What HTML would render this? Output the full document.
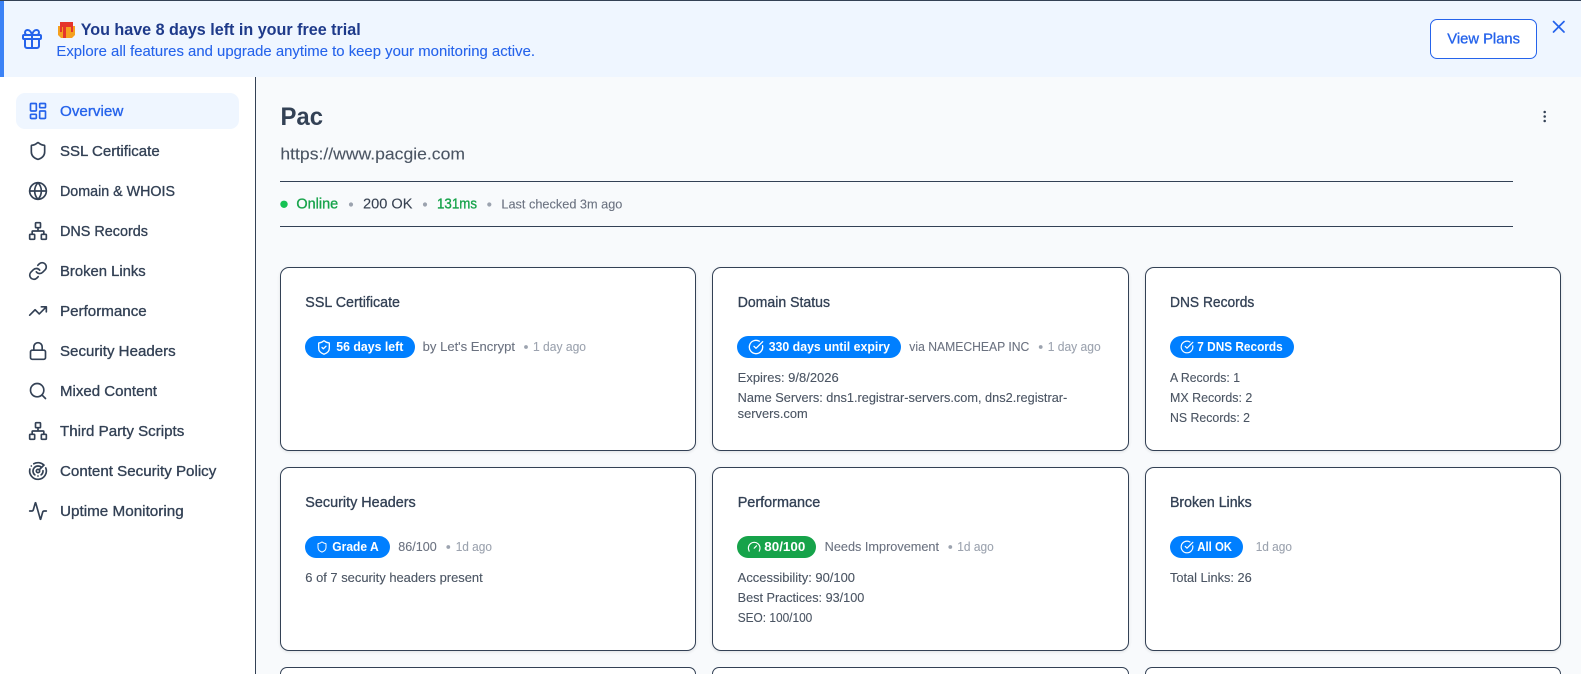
<!DOCTYPE html>
<html lang="en">
<head>
<meta charset="utf-8">
<title>Pac - Overview</title>
<style>
html,body{margin:0;padding:0;width:1581px;height:674px;overflow:hidden;background:#fff}
body{position:relative;font-family:"Liberation Sans",sans-serif}
.topline{position:absolute;left:0;top:0;width:1581px;height:1px;background:#334155}
.banner{position:absolute;left:0;top:1px;width:1581px;height:76px;background:#eff6ff;box-shadow:inset 4px 0 0 #3b82f6}
.btn{position:absolute;left:1430px;top:19px;width:105px;height:38px;background:#fff;border:1px solid #2563eb;border-radius:7px}
.main{position:absolute;left:256px;top:77px;width:1325px;height:597px;background:#f8fafc}
.side-line{position:absolute;left:255px;top:77px;width:1px;height:597px;background:#334155}
.active{position:absolute;left:16px;top:93px;width:223px;height:36px;background:#eff6ff;border-radius:9px}
.rule{position:absolute;left:280px;width:1233px;height:1px;background:#334155}
.card{position:absolute;box-sizing:border-box;width:416.33px;height:184px;background:#fff;border:1px solid #334155;border-radius:9px;box-shadow:0 1px 3px rgba(0,0,0,.1)}
.card.cut{height:7px;border-bottom:0;border-radius:9px 9px 0 0;box-shadow:none}
.pill{position:absolute;height:22px;border-radius:11px;background:#007fff}
svg.layer{position:absolute;left:0;top:0}
text{font-family:"Liberation Sans",sans-serif}
.side{font-size:14.6px;fill:#334155;stroke:#334155;stroke-width:.32}
.ct{font-size:14.6px;fill:#334155;stroke:#334155;stroke-width:.32}
.pt{font-size:12.6px;font-weight:700;fill:#fff}
.mt{font-size:12.6px;fill:#6b7280;stroke:#6b7280;stroke-width:.1}
.ag{font-size:12.6px;fill:#9ca3af;stroke:#9ca3af;stroke-width:.1}
.bd{font-size:12.6px;fill:#4b5563;stroke:#4b5563;stroke-width:.12}
.ic{fill:none;stroke:#334155;stroke-width:2;stroke-linecap:round;stroke-linejoin:round}
.pi{fill:none;stroke:#fff;stroke-width:2;stroke-linecap:round;stroke-linejoin:round}
</style>
</head>
<body>
<div class="banner"></div>
<div class="topline"></div>
<div class="btn"></div>
<div class="main"></div>
<div class="side-line"></div>
<div class="active"></div>
<div class="rule" style="top:181px"></div>
<div class="rule" style="top:226px"></div>

<div class="card" style="left:280px;top:267px"></div>
<div class="card" style="left:712.33px;top:267px"></div>
<div class="card" style="left:1144.67px;top:267px"></div>
<div class="card" style="left:280px;top:467px"></div>
<div class="card" style="left:712.33px;top:467px"></div>
<div class="card" style="left:1144.67px;top:467px"></div>
<div class="card cut" style="left:280px;top:667px"></div>
<div class="card cut" style="left:712.33px;top:667px"></div>
<div class="card cut" style="left:1144.67px;top:667px"></div>

<div class="pill" style="left:305px;top:336px;width:110px"></div>
<div class="pill" style="left:737px;top:336px;width:164px"></div>
<div class="pill" style="left:1170px;top:336px;width:124px"></div>
<div class="pill" style="left:305px;top:536px;width:85px"></div>
<div class="pill" style="left:737px;top:536px;width:79px;background:#16a34a"></div>
<div class="pill" style="left:1170px;top:536px;width:73px"></div>

<svg class="layer" width="1581" height="674" viewBox="0 0 1581 674" xmlns="http://www.w3.org/2000/svg">
<defs>
<symbol id="i-dash" viewBox="0 0 24 24"><rect x="3" y="3" width="7" height="9" rx="1"/><rect x="14" y="3" width="7" height="5" rx="1"/><rect x="14" y="12" width="7" height="9" rx="1"/><rect x="3" y="16" width="7" height="5" rx="1"/></symbol>
<symbol id="i-shield" viewBox="0 0 24 24"><path d="M20 13c0 5-3.5 7.5-7.66 8.95a1 1 0 0 1-.67-.01C7.5 20.5 4 18 4 13V6a1 1 0 0 1 1-1c2 0 4.5-1.2 6.24-2.72a1.17 1.17 0 0 1 1.52 0C14.51 3.81 17 5 19 5a1 1 0 0 1 1 1z"/></symbol>
<symbol id="i-shieldc" viewBox="0 0 24 24"><path d="M20 13c0 5-3.5 7.5-7.66 8.95a1 1 0 0 1-.67-.01C7.5 20.5 4 18 4 13V6a1 1 0 0 1 1-1c2 0 4.5-1.2 6.24-2.72a1.17 1.17 0 0 1 1.52 0C14.51 3.81 17 5 19 5a1 1 0 0 1 1 1z"/><path d="M9 12l2 2l4-4"/></symbol>
<symbol id="i-world" viewBox="0 0 24 24"><circle cx="12" cy="12" r="10"/><path d="M12 2a14.5 14.5 0 0 0 0 20a14.5 14.5 0 0 0 0-20M2 12h20"/></symbol>
<symbol id="i-map" viewBox="0 0 24 24"><rect x="16" y="16" width="6" height="6" rx="1"/><rect x="2" y="16" width="6" height="6" rx="1"/><rect x="9" y="2" width="6" height="6" rx="1"/><path d="M5 16v-3a1 1 0 0 1 1-1h12a1 1 0 0 1 1 1v3M12 12V8"/></symbol>
<symbol id="i-link" viewBox="0 0 24 24"><path d="M10 13a5 5 0 0 0 7.54.54l3-3a5 5 0 0 0-7.07-7.07l-1.72 1.71"/><path d="M14 11a5 5 0 0 0-7.54-.54l-3 3a5 5 0 0 0 7.07 7.07l1.71-1.71"/></symbol>
<symbol id="i-trend" viewBox="0 0 24 24"><path d="M22 7l-8.5 8.5l-5-5L2 17M16 7h6v6"/></symbol>
<symbol id="i-lock" viewBox="0 0 24 24"><rect x="3" y="11" width="18" height="11" rx="2"/><path d="M7 11V7a5 5 0 0 1 10 0v4"/></symbol>
<symbol id="i-search" viewBox="0 0 24 24"><circle cx="11" cy="11" r="8"/><path d="M21 21l-4.3-4.3"/></symbol>
<symbol id="i-radar" viewBox="0 0 24 24"><path d="M19.07 4.93A10 10 0 0 0 6.99 3.34M4 6h.01M2.29 9.62A10 10 0 1 0 21.31 8.35M16.24 7.76A6 6 0 1 0 8.23 16.67M12 18h.01M17.99 11.66A6 6 0 0 1 15.77 16.67"/><circle cx="12" cy="12" r="2"/><path d="M13.41 10.59l5.66-5.66"/></symbol>
<symbol id="i-pulse" viewBox="0 0 24 24"><path d="M22 12h-2.48a2 2 0 0 0-1.93 1.46l-2.35 8.36a.25.25 0 0 1-.48 0L9.24 2.18a.25.25 0 0 0-.48 0l-2.35 8.36A2 2 0 0 1 4.49 12H2"/></symbol>
<symbol id="i-check" viewBox="0 0 24 24"><path d="M21.801 10A10 10 0 1 1 17 3.335M9 11l3 3L22 4"/></symbol>
<symbol id="i-gauge" viewBox="0 0 24 24"><path d="M12 14l4-4M3.34 19a10 10 0 1 1 17.32 0"/></symbol>
</defs>

<!-- banner -->
<g fill="none" stroke="#2563eb" stroke-width="2" stroke-linecap="round" stroke-linejoin="round" transform="translate(20 27)">
<rect x="3" y="8" width="18" height="4" rx="1"/>
<path d="M12 8v13M19 12v7a2 2 0 0 1-2 2H7a2 2 0 0 1-2-2v-7M7.5 8a2.5 2.5 0 0 1 0-5A4.8 8 0 0 1 12 8a4.8 8 0 0 1 4.5-5a2.5 2.5 0 0 1 0 5"/>
</g>
<g>
<path d="M58 26h17v9l-3 3h-11l-3-3z" fill="#f5a01f"/>
<rect x="60" y="22" width="13" height="5" fill="#e5352b"/>
<rect x="63" y="25" width="3" height="13" fill="#e5352b"/>
<rect x="60" y="27" width="2" height="5" fill="#e5352b"/>
<rect x="71" y="27" width="2" height="5" fill="#e5352b"/>
</g>
<text x="80.7" y="35" textLength="280" lengthAdjust="spacingAndGlyphs" font-size="16.7" font-weight="700" fill="#1e3a8a">You have 8 days left in your free trial</text>
<text x="56.4" y="56" textLength="478.6" lengthAdjust="spacingAndGlyphs" font-size="14.6" fill="#2563eb" stroke="#2563eb" stroke-width=".1">Explore all features and upgrade anytime to keep your monitoring active.</text>
<text x="1447.3" y="43.5" textLength="72.7" lengthAdjust="spacingAndGlyphs" font-size="14.6" fill="#2563eb" stroke="#2563eb" stroke-width=".32">View Plans</text>
<path d="M1553.5 21.5l10.5 10.5M1564 21.5l-10.5 10.5" fill="none" stroke="#2563eb" stroke-width="1.7" stroke-linecap="round"/>

<!-- sidebar -->
<use href="#i-dash" x="28" y="101" width="20" height="20" class="ic" style="stroke:#2563eb"/>
<use href="#i-shield" x="28" y="141" width="20" height="20" class="ic"/>
<use href="#i-world" x="28" y="181" width="20" height="20" class="ic"/>
<use href="#i-map" x="28" y="221" width="20" height="20" class="ic"/>
<use href="#i-link" x="28" y="261" width="20" height="20" class="ic"/>
<use href="#i-trend" x="28" y="301" width="20" height="20" class="ic"/>
<use href="#i-lock" x="28" y="341" width="20" height="20" class="ic"/>
<use href="#i-search" x="28" y="381" width="20" height="20" class="ic"/>
<use href="#i-map" x="28" y="421" width="20" height="20" class="ic"/>
<use href="#i-radar" x="28" y="461" width="20" height="20" class="ic"/>
<use href="#i-pulse" x="28" y="501" width="20" height="20" class="ic"/>

<text x="60" y="116" textLength="63.3" lengthAdjust="spacingAndGlyphs" class="side" style="fill:#2563eb;stroke:#2563eb">Overview</text>
<text x="60" y="156" textLength="99.7" lengthAdjust="spacingAndGlyphs" class="side">SSL Certificate</text>
<text x="60" y="196" textLength="115" lengthAdjust="spacingAndGlyphs" class="side">Domain &amp; WHOIS</text>
<text x="60" y="236" textLength="88" lengthAdjust="spacingAndGlyphs" class="side">DNS Records</text>
<text x="60" y="276" textLength="85.7" lengthAdjust="spacingAndGlyphs" class="side">Broken Links</text>
<text x="60" y="316" textLength="86.7" lengthAdjust="spacingAndGlyphs" class="side">Performance</text>
<text x="60" y="356" textLength="115.7" lengthAdjust="spacingAndGlyphs" class="side">Security Headers</text>
<text x="60" y="396" textLength="97" lengthAdjust="spacingAndGlyphs" class="side">Mixed Content</text>
<text x="60" y="436" textLength="124.3" lengthAdjust="spacingAndGlyphs" class="side">Third Party Scripts</text>
<text x="60" y="476" textLength="156.3" lengthAdjust="spacingAndGlyphs" class="side">Content Security Policy</text>
<text x="60" y="516" textLength="123.7" lengthAdjust="spacingAndGlyphs" class="side">Uptime Monitoring</text>

<!-- header -->
<text x="280.5" y="125" textLength="42.5" lengthAdjust="spacingAndGlyphs" font-size="25" font-weight="700" fill="#334155">Pac</text>
<text x="280.4" y="159.3" textLength="184.6" lengthAdjust="spacingAndGlyphs" font-size="16.6" fill="#4b5563" stroke="#4b5563" stroke-width=".1">https://www.pacgie.com</text>
<g fill="#334155"><circle cx="1544.7" cy="112" r="1.25"/><circle cx="1544.7" cy="116.5" r="1.25"/><circle cx="1544.7" cy="121" r="1.25"/></g>

<circle cx="284" cy="204.3" r="3.7" fill="#16c253"/>
<text x="296.4" y="208.7" textLength="41.8" lengthAdjust="spacingAndGlyphs" font-size="14.6" fill="#16a34a" stroke="#16a34a" stroke-width=".32">Online</text>
<circle cx="351" cy="204.5" r="2.1" fill="#9ca3af"/>
<text x="363" y="208.7" textLength="49.5" lengthAdjust="spacingAndGlyphs" font-size="14.6" fill="#374151" stroke="#374151" stroke-width=".1">200 OK</text>
<circle cx="425" cy="204.5" r="2.1" fill="#9ca3af"/>
<text x="437" y="208.7" textLength="40" lengthAdjust="spacingAndGlyphs" font-size="14.6" fill="#16a34a" stroke="#16a34a" stroke-width=".32">131ms</text>
<circle cx="489.3" cy="204.5" r="2.1" fill="#9ca3af"/>
<text x="501.4" y="208.3" textLength="121" lengthAdjust="spacingAndGlyphs" class="mt">Last checked 3m ago</text>

<!-- row 1 -->
<text x="305.3" y="307" textLength="94.7" lengthAdjust="spacingAndGlyphs" class="ct">SSL Certificate</text>
<use href="#i-shieldc" x="316" y="339.5" width="16" height="16" class="pi"/>
<text x="336.3" y="351" textLength="67" lengthAdjust="spacingAndGlyphs" class="pt">56 days left</text>
<text x="422.7" y="351" textLength="92.3" lengthAdjust="spacingAndGlyphs" class="mt">by Let's Encrypt</text>
<circle cx="526" cy="347" r="1.9" fill="#9ca3af"/>
<text x="533" y="351" textLength="53" lengthAdjust="spacingAndGlyphs" class="ag">1 day ago</text>

<text x="737.7" y="307" textLength="92.3" lengthAdjust="spacingAndGlyphs" class="ct">Domain Status</text>
<use href="#i-check" x="748" y="339" width="16" height="16" class="pi"/>
<text x="768.7" y="351" textLength="121.3" lengthAdjust="spacingAndGlyphs" class="pt">330 days until expiry</text>
<text x="909.3" y="351" textLength="120" lengthAdjust="spacingAndGlyphs" class="mt">via NAMECHEAP INC</text>
<circle cx="1040.7" cy="347" r="1.9" fill="#9ca3af"/>
<text x="1047.7" y="351" textLength="53" lengthAdjust="spacingAndGlyphs" class="ag">1 day ago</text>
<text x="737.7" y="382" textLength="101" lengthAdjust="spacingAndGlyphs" class="bd">Expires: 9/8/2026</text>
<text x="737.7" y="402" textLength="329.6" lengthAdjust="spacingAndGlyphs" class="bd">Name Servers: dns1.registrar-servers.com, dns2.registrar-</text>
<text x="737.7" y="418" textLength="70" lengthAdjust="spacingAndGlyphs" class="bd">servers.com</text>

<text x="1170" y="307" textLength="84.3" lengthAdjust="spacingAndGlyphs" class="ct">DNS Records</text>
<use href="#i-check" x="1180" y="340" width="14" height="14" class="pi"/>
<text x="1197.3" y="351" textLength="85.4" lengthAdjust="spacingAndGlyphs" class="pt">7 DNS Records</text>
<text x="1170" y="382" textLength="70" lengthAdjust="spacingAndGlyphs" class="bd">A Records: 1</text>
<text x="1170" y="402" textLength="82.3" lengthAdjust="spacingAndGlyphs" class="bd">MX Records: 2</text>
<text x="1170" y="422" textLength="80" lengthAdjust="spacingAndGlyphs" class="bd">NS Records: 2</text>

<!-- row 2 -->
<text x="305.3" y="507" textLength="110.4" lengthAdjust="spacingAndGlyphs" class="ct">Security Headers</text>
<use href="#i-shield" x="316" y="541" width="12" height="12" class="pi"/>
<text x="332.3" y="551" textLength="46.4" lengthAdjust="spacingAndGlyphs" class="pt">Grade A</text>
<text x="398.3" y="551" textLength="38.4" lengthAdjust="spacingAndGlyphs" class="mt">86/100</text>
<circle cx="448.3" cy="547" r="1.9" fill="#9ca3af"/>
<text x="455.7" y="551" textLength="36.3" lengthAdjust="spacingAndGlyphs" class="ag">1d ago</text>
<text x="305.3" y="582" textLength="177.4" lengthAdjust="spacingAndGlyphs" class="bd">6 of 7 security headers present</text>

<text x="737.7" y="507" textLength="82.6" lengthAdjust="spacingAndGlyphs" class="ct">Performance</text>
<use href="#i-gauge" x="747.2" y="540" width="14" height="14" class="pi"/>
<text x="764.3" y="551" textLength="41" lengthAdjust="spacingAndGlyphs" class="pt">80/100</text>
<text x="824.7" y="551" textLength="114.3" lengthAdjust="spacingAndGlyphs" class="mt">Needs Improvement</text>
<circle cx="950.3" cy="547" r="1.9" fill="#9ca3af"/>
<text x="957.3" y="551" textLength="36.4" lengthAdjust="spacingAndGlyphs" class="ag">1d ago</text>
<text x="737.7" y="582" textLength="117.3" lengthAdjust="spacingAndGlyphs" class="bd">Accessibility: 90/100</text>
<text x="737.7" y="602" textLength="126.6" lengthAdjust="spacingAndGlyphs" class="bd">Best Practices: 93/100</text>
<text x="737.7" y="622" textLength="74.6" lengthAdjust="spacingAndGlyphs" class="bd">SEO: 100/100</text>

<text x="1170" y="507" textLength="81.7" lengthAdjust="spacingAndGlyphs" class="ct">Broken Links</text>
<use href="#i-check" x="1180" y="540" width="14" height="14" class="pi"/>
<text x="1197.3" y="551" textLength="34.7" lengthAdjust="spacingAndGlyphs" class="pt">All OK</text>
<text x="1255.7" y="551" textLength="36.3" lengthAdjust="spacingAndGlyphs" class="ag">1d ago</text>
<text x="1170" y="582" textLength="81.7" lengthAdjust="spacingAndGlyphs" class="bd">Total Links: 26</text>
</svg>
</body>
</html>
